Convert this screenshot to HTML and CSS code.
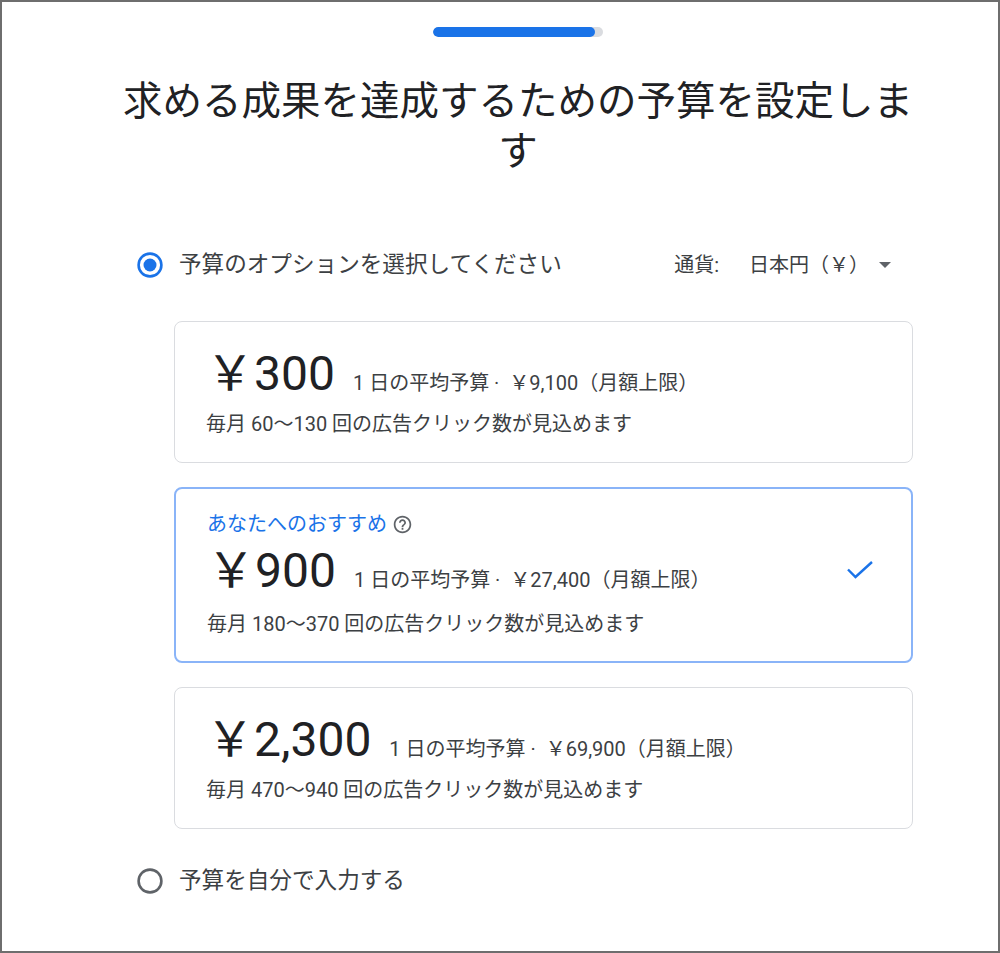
FILE: index.html
```html
<!DOCTYPE html>
<html lang="ja">
  <head>
    <meta charset="UTF-8" />
    <meta name="viewport" content="width=device-width, initial-scale=1.0" />
    <title>予算の設定</title>
    <link rel="stylesheet" href="styles.css">
  </head>
  <body>
    <div class="frame">
      <div class="content">
        <div class="progress"><div class="progress-fill"></div></div>

        <h1 class="title">求める成果を達成するための予算を設定します</h1>

        <div class="option-row">
          <svg class="radio" width="26" height="26" viewBox="0 0 26 26">
            <circle cx="13" cy="13" r="11.4" fill="none" stroke="#1a73e8" stroke-width="2.6" />
            <circle cx="13" cy="13" r="6.5" fill="#1a73e8" />
          </svg>
          <span class="option-label">予算のオプションを選択してください</span>
          <div class="currency">
            <span class="currency-label">通貨:</span>
            <span class="currency-value">日本円（￥）</span>
            <svg class="dropdown" width="12" height="6" viewBox="0 0 12 6">
              <path d="M0 0l6 6 6-6z" fill="#5f6368" />
            </svg>
          </div>
        </div>

        <div class="cards">
          <div class="card">
            <div class="amount-row">
              <span class="amount">￥300</span>
              <span class="daily">1 日の平均予算 · &nbsp;￥9,100（月額上限）</span>
            </div>
            <div class="clicks">毎月 60〜130 回の広告クリック数が見込めます</div>
          </div>

          <div class="card card-selected">
            <div class="recommend">
              <span>あなたへのおすすめ</span>
              <svg class="help" width="21" height="21" viewBox="0 0 24 24">
                <path fill="#5f6368" d="M11 18h2v-2h-2v2zm1-16C6.48 2 2 6.48 2 12s4.48 10 10 10 10-4.48 10-10S17.52 2 12 2zm0 18c-4.41 0-8-3.59-8-8s3.59-8 8-8 8 3.59 8 8-3.59 8-8 8zm0-14c-2.21 0-4 1.79-4 4h2c0-1.1.9-2 2-2s2 .9 2 2c0 2-3 1.75-3 5h2c0-2.25 3-2.5 3-5 0-2.21-1.79-4-4-4z" />
              </svg>
            </div>
            <div class="amount-row">
              <span class="amount">￥900</span>
              <span class="daily">1 日の平均予算 · &nbsp;￥27,400（月額上限）</span>
              <svg class="check" width="28" height="22" viewBox="0 0 28 22">
                <polyline points="2,9.5 9.5,17 26,2" fill="none" stroke="#1a73e8" stroke-width="2.4" />
              </svg>
            </div>
            <div class="clicks">毎月 180〜370 回の広告クリック数が見込めます</div>
          </div>

          <div class="card">
            <div class="amount-row">
              <span class="amount">￥2,300</span>
              <span class="daily">1 日の平均予算 · &nbsp;￥69,900（月額上限）</span>
            </div>
            <div class="clicks">毎月 470〜940 回の広告クリック数が見込めます</div>
          </div>
        </div>

        <div class="option-row option-bottom">
          <svg class="radio" width="26" height="26" viewBox="0 0 26 26">
            <circle cx="13" cy="13" r="11.4" fill="none" stroke="#5f6368" stroke-width="2.6" />
          </svg>
          <span class="option-label">予算を自分で入力する</span>
        </div>
      </div>
    </div>
  </body>
</html>
```

FILE: styles.css
```css
html {
  box-sizing: border-box;
}
*,
*::before,
*::after {
  box-sizing: inherit;
}
body {
  margin: 0;
  padding: 0;
  background-color: #ffffff;
  font-family: Roboto, "Noto Sans CJK JP", sans-serif;
  color: #3c4043;
}
.frame {
  height: 953px;
  border: 2px solid #6e6e6e;
  overflow: hidden;
}
.content {
  width: 800px;
  margin-left: 116px;
}
.progress {
  width: 170px;
  height: 10px;
  margin: 25px auto 0;
  border-radius: 5px;
  background-color: #dadce0;
  overflow: hidden;
}
.progress-fill {
  width: 162px;
  height: 100%;
  border-radius: 5px;
  background-color: #1a73e8;
}
.title {
  margin: 36px 0 0;
  font-family: "Noto Sans CJK JP", sans-serif;
  font-size: 39.5px;
  font-weight: 400;
  line-height: 50px;
  text-align: center;
  color: #202124;
}
.option-row {
  display: flex;
  align-items: center;
  height: 40px;
  margin-top: 72px;
  padding: 0 27px 0 19px;
}
.radio {
  flex: none;
  display: block;
}
.option-label {
  margin-left: 16px;
  font-size: 22.6px;
  line-height: 30px;
  color: #3c4043;
}
.currency {
  display: flex;
  align-items: center;
  margin-left: auto;
  font-size: 20px;
  line-height: 28px;
  color: #3c4043;
}
.currency-value {
  margin-left: 30px;
}
.dropdown {
  display: block;
  margin-left: 10px;
}
.cards {
  display: flex;
  flex-direction: column;
  gap: 24px;
  margin: 36px 5px 0 56px;
}
.card {
  border: 1px solid #dadce0;
  border-radius: 8px;
  padding: 24px 36px 24px 31px;
}
.card-selected {
  border: 2px solid #8ab4f8;
  padding: 21px 37px 23px 31px;
}
.amount-row {
  display: flex;
  align-items: baseline;
  height: 56px;
}
.amount {
  font-size: 48px;
  line-height: 56px;
  color: #202124;
}
.daily {
  margin-left: 18px;
  font-size: 20px;
  line-height: 28px;
  color: #3c4043;
}
.check {
  align-self: center;
  margin-left: auto;
  display: block;
}
.clicks {
  margin-top: 8px;
  font-size: 20px;
  line-height: 28px;
  color: #3c4043;
}
.card-selected .clicks {
  margin-top: 11px;
}
.recommend {
  display: flex;
  align-items: center;
  height: 28px;
  margin-bottom: 5px;
  font-size: 20px;
  line-height: 28px;
  color: #1a73e8;
}
.help {
  display: block;
  margin-left: 5px;
}
.option-bottom {
  margin-top: 32px;
}
```
